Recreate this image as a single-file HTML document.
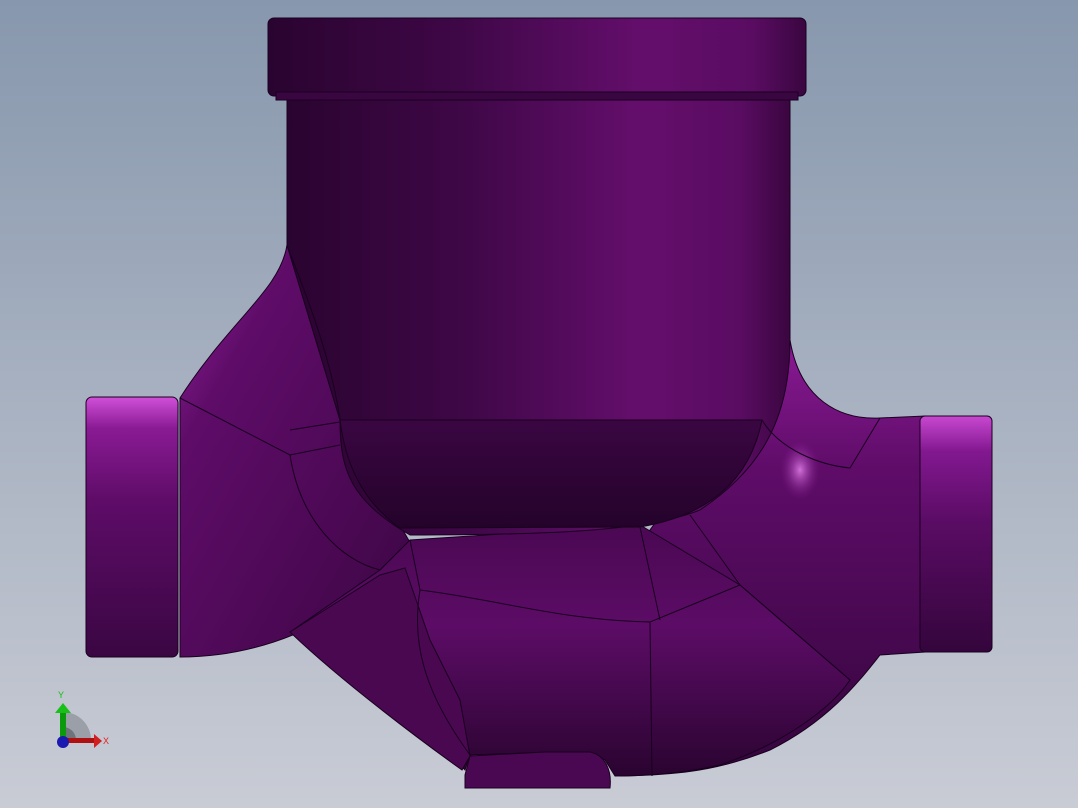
<!DOCTYPE html>
<html><head><style>html,body{margin:0;padding:0;width:1078px;height:808px;overflow:hidden}</style></head>
<body>
<svg width="1078" height="808" viewBox="0 0 1078 808" xmlns="http://www.w3.org/2000/svg">
<defs>
<linearGradient id="bg" x1="0" y1="0" x2="0" y2="1"><stop offset="0" stop-color="#8797ad"/><stop offset="1" stop-color="#c9ccd5"/></linearGradient>
<linearGradient id="cyl" x1="0" y1="0" x2="1" y2="0"><stop offset="0" stop-color="#2a0430"/><stop offset="0.35" stop-color="#3e0746"/><stop offset="0.7" stop-color="#640e6c"/><stop offset="0.9" stop-color="#5a0c62"/><stop offset="1" stop-color="#3a0640"/></linearGradient>
<linearGradient id="pipeL" x1="0" y1="0" x2="0" y2="1"><stop offset="0" stop-color="#d050d8"/><stop offset="0.12" stop-color="#8a1a94"/><stop offset="0.4" stop-color="#5e0c68"/><stop offset="1" stop-color="#3a0642"/></linearGradient>
<linearGradient id="bodyL" x1="0" y1="0" x2="1" y2="1"><stop offset="0" stop-color="#9a24a4"/><stop offset="0.25" stop-color="#5e0c68"/><stop offset="0.7" stop-color="#4a0852"/><stop offset="1" stop-color="#380640"/></linearGradient>
<linearGradient id="pipeR" x1="0" y1="0" x2="0" y2="1"><stop offset="0" stop-color="#c848d0"/><stop offset="0.15" stop-color="#821890"/><stop offset="0.45" stop-color="#5a0c64"/><stop offset="1" stop-color="#34053c"/></linearGradient>
<linearGradient id="bodyR" x1="0" y1="0" x2="0" y2="1"><stop offset="0" stop-color="#8a1a94"/><stop offset="0.3" stop-color="#5e0c68"/><stop offset="1" stop-color="#34053c"/></linearGradient>
<linearGradient id="low" x1="0" y1="0" x2="0" y2="1"><stop offset="0" stop-color="#4a0852"/><stop offset="0.4" stop-color="#5c0c66"/><stop offset="1" stop-color="#2a0430"/></linearGradient>
<linearGradient id="bowl" x1="0" y1="0" x2="0" y2="1"><stop offset="0" stop-color="#3a0642"/><stop offset="1" stop-color="#24032a"/></linearGradient>
<radialGradient id="hl" cx="0.5" cy="0.5" r="0.5"><stop offset="0" stop-color="#d070d8"/><stop offset="1" stop-color="#7a1484" stop-opacity="0"/></radialGradient>
</defs>
<rect width="1078" height="808" fill="url(#bg)"/>
<g stroke="#1a0020" stroke-width="1">
<path d="M790 340 C800 400 840 420 880 418 L925 416 L925 652 L880 655 C860 680 830 720 770 750 C720 770 680 775 620 776 L600 600 L700 460 Z" fill="url(#bodyR)"/>
<path d="M287 245 C280 290 230 320 180 398 L180 657 C230 657 270 645 300 632 L420 560 L340 420 Z" fill="url(#bodyL)"/>
<path d="M290 632 L380 570 L410 540 L640 525 L740 585 L850 680 C830 710 780 745 720 765 C690 772 650 776 615 776 L605 760 C590 752 570 752 550 752 L470 755 L465 770 L455 760 C420 730 350 680 290 632 Z" fill="url(#low)"/>
<path d="M465 775 L470 756 L545 752 L590 752 C605 755 612 770 610 788 L465 788 Z" fill="#4a0852"/>
<path d="M290 632 L380 575 L405 568 L430 640 L460 700 L470 756 L462 770 C420 740 340 680 290 632 Z" fill="#4a0850"/>
<path d="M287 96 L790 96 L790 340 C790 420 760 470 700 510 C650 530 560 535 410 535 C350 500 340 470 340 420 L287 245 Z" fill="url(#cyl)"/>
<path d="M340 420 L762 420 C750 480 710 515 640 527 L400 528 C360 500 345 460 340 420 Z" fill="url(#bowl)"/>
<rect x="268" y="18" width="538" height="78" rx="6" fill="url(#cyl)"/>
<rect x="276" y="92" width="522" height="8" fill="#3a0642"/>
<rect x="86" y="397" width="92" height="260" rx="6" fill="url(#pipeL)"/>
<rect x="920" y="416" width="72" height="236" rx="5" fill="url(#pipeR)"/>
</g>
<ellipse cx="800" cy="470" rx="20" ry="30" fill="url(#hl)"/>
<g stroke="#1a0020" stroke-width="1" fill="none">
<path d="M287 245 C300 280 330 350 340 420"/>
<path d="M180 398 L290 455 L340 445"/>
<path d="M290 430 L340 422"/>
<path d="M290 455 C300 520 340 560 380 570"/>
<path d="M410 540 L420 590 C500 600 560 620 650 622 L740 585"/>
<path d="M650 622 L652 776"/>
<path d="M740 585 L850 680"/>
<path d="M762 420 C780 450 820 465 850 468 L880 418"/>
<path d="M640 527 L660 620"/>
<path d="M690 515 L740 585"/>
<path d="M420 590 C410 650 430 700 470 755"/>
</g>
<path d="M63 712 A28 28 0 0 1 91 740 L63 740 Z" fill="#9ba0a8"/>
<path d="M63 727 A13 13 0 0 1 76 740 L63 740 Z" fill="#6f737a"/>
<rect x="60" y="711" width="6" height="30" fill="#0a9a0a"/>
<path d="M55 713 L63 703 L71 713 Z" fill="#18c018"/>
<rect x="63" y="738" width="32" height="5" fill="#b01010"/>
<path d="M94 734 L102 741 L94 748 Z" fill="#d02020"/>
<circle cx="63" cy="742" r="6" fill="#1a1ab0"/>
<text x="58" y="698" font-family="Liberation Sans, sans-serif" font-size="9" fill="#10c010">Y</text>
<text x="103" y="744" font-family="Liberation Sans, sans-serif" font-size="9" fill="#e02020">X</text>
</svg>
</body></html>
